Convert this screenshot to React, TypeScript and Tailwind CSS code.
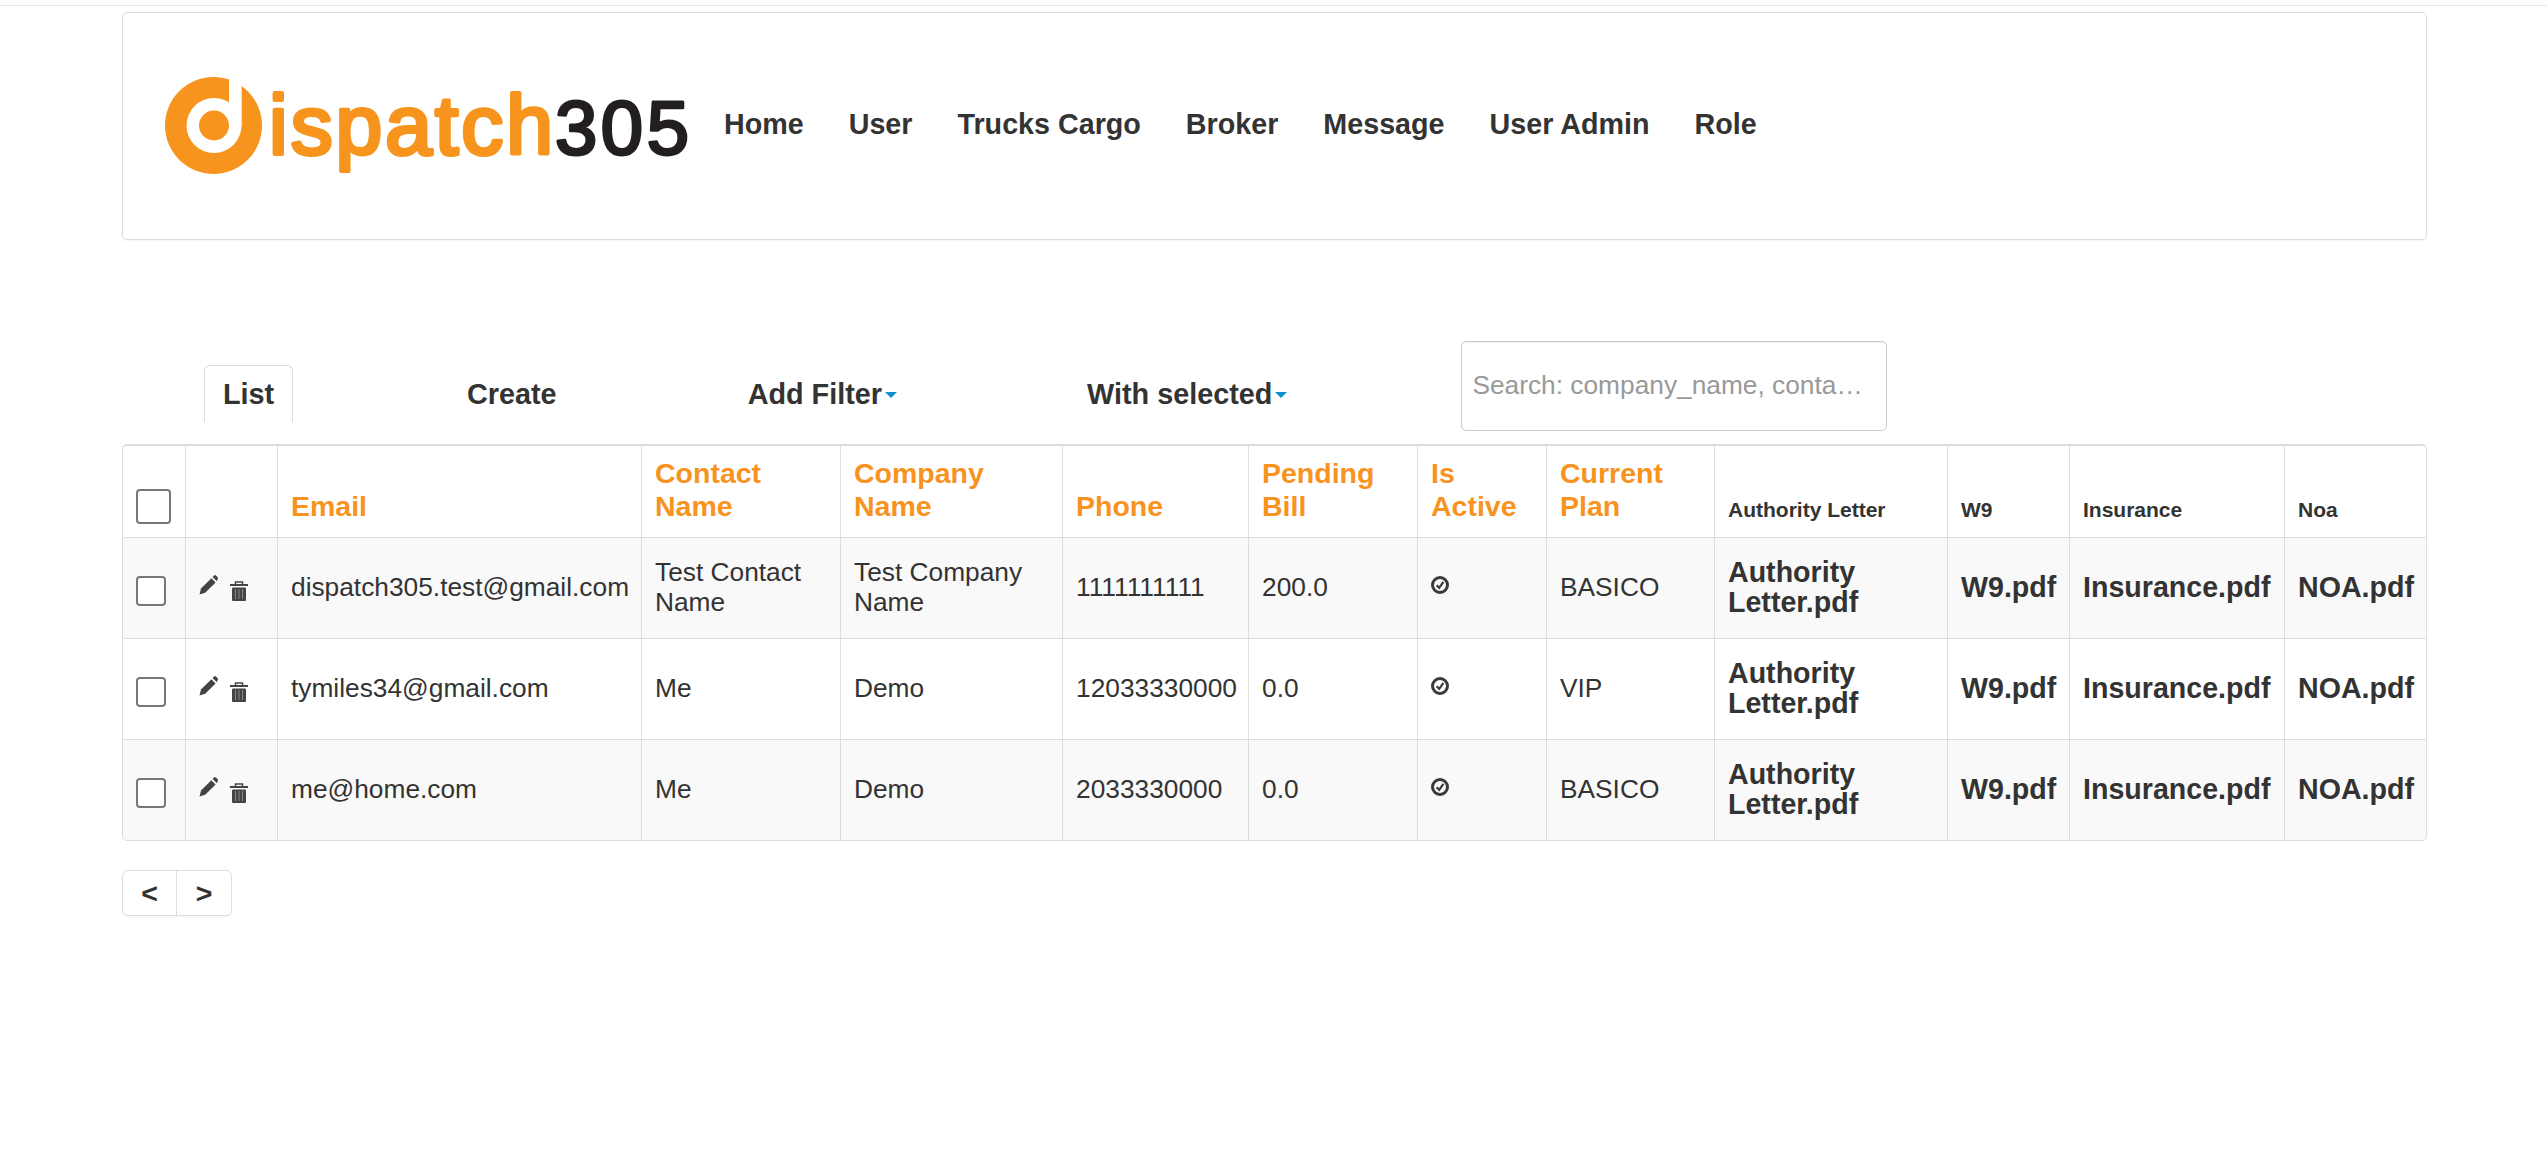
const navLinks = ["Home", "User", "Trucks Cargo", "Broker", "Message", "User Admin", "Role"];

const rows = [
  { email: "dispatch305.test@gmail.com", contact: "Test Contact Name", company: "Test Company Name", phone: "1111111111", bill: "200.0", plan: "BASICO" },
  { email: "tymiles34@gmail.com", contact: "Me", company: "Demo", phone: "12033330000", bill: "0.0", plan: "VIP" },
  { email: "me@home.com", contact: "Me", company: "Demo", phone: "2033330000", bill: "0.0", plan: "BASICO" },
];

const thBig = "border-r border-b border-[#ddd] px-[13px] pb-[14px] text-left align-bottom text-[28.5px] font-bold leading-[33px] text-[#f7931e]";
const thSmall = "border-r border-b border-[#ddd] px-[13px] pb-[12px] text-left align-bottom text-[21px] font-bold leading-[30px] text-[#333]";
const td = "border-r border-[#ddd] px-[13px] pb-[3px] align-middle text-[26.3px] leading-[30px] text-[#333]";
const tdFile = "border-r border-[#ddd] px-[13px] pb-[3px] align-middle text-[28.6px] font-bold leading-[30px] text-[#333]";

function Logo() {
  return (
    <svg width="530" height="100" viewBox="0 0 530 100" className="shrink-0">
      <circle cx="49.5" cy="49.5" r="48.5" fill="#f7941d" />
      <circle cx="50" cy="49.5" r="27.5" fill="#fff" />
      <rect x="65" y="-1" width="12.7" height="50" fill="#fff" />
      <circle cx="50" cy="49.5" r="15" fill="#f7941d" />
      <text x="105" y="77.5" fontFamily="Liberation Sans" fontSize="84" fill="#f7941d" stroke="#f7941d" strokeWidth="4" strokeLinejoin="round" textLength="284" lengthAdjust="spacing">
        ispatch
      </text>
      <text x="391" y="77.5" fontFamily="Liberation Sans" fontSize="76" fill="#231f20" stroke="#231f20" strokeWidth="3" strokeLinejoin="round" textLength="134" lengthAdjust="spacing">
        305
      </text>
    </svg>
  );
}

function Caret() {
  return <span className="ml-[3px] inline-block h-0 w-0 border-x-[6px] border-t-[6px] border-x-transparent border-t-[#0a8fd0] align-middle" />;
}

function PencilIcon() {
  return (
    <svg width="19" height="20" viewBox="0 0 19 20" className="shrink-0">
      <path d="M0.5 19.5L2 13.6L12.4 3.2L16.6 7.4L6.2 17.8Z" fill="#444" />
      <path d="M13.6 2L15 0.6C15.6 0 16.4 0 17 0.6L18.6 2.2C19.2 2.8 19.2 3.6 18.6 4.2L17.8 6.2Z" fill="#444" />
    </svg>
  );
}

function TrashIcon() {
  return (
    <svg width="18" height="20" viewBox="0 0 18 20" className="shrink-0">
      <path d="M5.5 3V1H12.5V3" fill="none" stroke="#444" strokeWidth="1.5" />
      <rect x="0" y="3" width="18" height="2" fill="#444" />
      <rect x="2" y="6.5" width="14" height="13.5" rx="1" fill="#444" />
      <path d="M5.5 8V18M9 8V18M12.5 8V18" stroke="#888" strokeWidth="1" />
    </svg>
  );
}

function ActiveIcon() {
  return (
    <svg width="18" height="18" viewBox="0 0 18 18" className="mb-[4px] block">
      <circle cx="9" cy="9" r="7.5" fill="none" stroke="#3a3a3a" strokeWidth="3" />
      <path d="M5.6 9.2L8.2 11.8L12.4 5.8" fill="none" stroke="#3a3a3a" strokeWidth="2.2" />
    </svg>
  );
}

export default function App() {
  return (
    <div className="min-h-[1172px] bg-white pl-[122px] pr-[120px] font-['Liberation_Sans',Arial,sans-serif] text-[#333]">
      <div className="-ml-[122px] -mr-[120px] h-[6px] border-b border-[#e7e7e7]" />

      <nav className="mt-[6px] flex h-[228px] items-start rounded-[5px] border border-[#ddd] pt-[63px] pl-[41px] shadow-[0_1px_2px_rgba(0,0,0,0.05)]">
        <Logo />
        <ul className="ml-[30px] flex h-[98px] items-center gap-[45px] pb-[1px] text-[28.7px] font-bold text-[#333]">
          {navLinks.map((link) => (
            <li key={link}>{link}</li>
          ))}
        </ul>
      </nav>

      <div className="relative mt-[101px] flex h-[103px] items-start pl-[82px]">
        <div className="mt-[24px] flex h-[57px] w-[89px] items-center justify-center rounded-t-[6px] border-x border-t border-[#ddd] pt-[2px] text-[28.8px] font-bold">
          List
        </div>
        <div className="ml-[174px] mt-[26px] flex h-[56px] items-center text-[28.8px] font-bold">Create</div>
        <div className="ml-[191px] mt-[26px] flex h-[56px] items-center text-[28.8px] font-bold">
          Add Filter
          <Caret />
        </div>
        <div className="ml-[190px] mt-[26px] flex h-[56px] items-center text-[28.8px] font-bold">
          With selected
          <Caret />
        </div>
        <input
          className="ml-[174px] h-[90px] w-[426px] rounded-[5px] border border-[#ccc] pl-[10px] pr-[16px] pb-[2px] text-[26.3px] text-ellipsis text-[#333] shadow-[inset_0_1px_1px_rgba(0,0,0,0.075)] outline-none placeholder:text-[#999]"
          placeholder="Search: company_name, contact_name, email"
        />
      </div>

      <div className="overflow-hidden rounded-[5px] border-x border-b border-t-2 border-[#ddd]">
        <table className="w-full table-fixed border-separate border-spacing-0">
          <colgroup>
            <col className="w-[63px]" />
            <col className="w-[92px]" />
            <col className="w-[364px]" />
            <col className="w-[199px]" />
            <col className="w-[222px]" />
            <col className="w-[186px]" />
            <col className="w-[169px]" />
            <col className="w-[129px]" />
            <col className="w-[168px]" />
            <col className="w-[233px]" />
            <col className="w-[122px]" />
            <col className="w-[215px]" />
            <col className="w-[141px]" />
          </colgroup>
          <thead>
            <tr className="h-[92px]">
              <th className="border-r border-b border-[#ddd] pb-[13px] pl-[13px] text-left align-bottom">
                <input type="checkbox" className="block h-[35px] w-[35px] appearance-none rounded-[4px] border-2 border-[#767676] bg-white" />
              </th>
              <th className="border-r border-b border-[#ddd]" />
              <th className={thBig}>Email</th>
              <th className={thBig}>Contact Name</th>
              <th className={thBig}>Company Name</th>
              <th className={thBig}>Phone</th>
              <th className={thBig}>Pending Bill</th>
              <th className={thBig}>Is Active</th>
              <th className={thBig}>Current Plan</th>
              <th className={thSmall}>Authority Letter</th>
              <th className={thSmall}>W9</th>
              <th className={thSmall}>Insurance</th>
              <th className={thSmall.replace("border-r ", "")}>Noa</th>
            </tr>
          </thead>
          <tbody>
            {rows.map((row, i) => (
              <tr key={row.email} className={i === 2 ? "h-[100px] bg-[#f9f9f9]" : i === 0 ? "h-[101px] bg-[#f9f9f9]" : "h-[101px] bg-white"}>
                <td className={`border-r border-[#ddd] pl-[13px] align-middle ${i < 2 ? "border-b" : ""}`}>
                  <input type="checkbox" className="mt-[6px] block h-[30px] w-[30px] appearance-none rounded-[4px] border-2 border-[#767676] bg-white" />
                </td>
                <td className={`border-r border-[#ddd] pl-[13px] align-middle ${i < 2 ? "border-b" : ""}`}>
                  <div className="flex items-start gap-[12px]">
                    <PencilIcon />
                    <div className="mt-[6px]">
                      <TrashIcon />
                    </div>
                  </div>
                </td>
                <td className={`${td} ${i < 2 ? "border-b" : ""}`}>{row.email}</td>
                <td className={`${td} ${i < 2 ? "border-b" : ""}`}>{row.contact}</td>
                <td className={`${td} ${i < 2 ? "border-b" : ""}`}>{row.company}</td>
                <td className={`${td} ${i < 2 ? "border-b" : ""}`}>{row.phone}</td>
                <td className={`${td} ${i < 2 ? "border-b" : ""}`}>{row.bill}</td>
                <td className={`${td} ${i < 2 ? "border-b" : ""}`}>
                  <ActiveIcon />
                </td>
                <td className={`${td} ${i < 2 ? "border-b" : ""}`}>{row.plan}</td>
                <td className={`${tdFile} ${i < 2 ? "border-b" : ""}`}>Authority Letter.pdf</td>
                <td className={`${tdFile} ${i < 2 ? "border-b" : ""}`}>W9.pdf</td>
                <td className={`${tdFile} ${i < 2 ? "border-b" : ""}`}>Insurance.pdf</td>
                <td className={`${tdFile} !border-r-0 ${i < 2 ? "border-b" : ""}`}>NOA.pdf</td>
              </tr>
            ))}
          </tbody>
        </table>
      </div>

      <div className="mt-[29px] flex h-[46px] w-[110px] rounded-[6px] border border-[#ddd] text-[28.5px] font-bold shadow-[0_1px_2px_rgba(0,0,0,0.05)]">
        <div className="flex w-[54px] items-center justify-center border-r border-[#ddd]">&lt;</div>
        <div className="flex flex-1 items-center justify-center">&gt;</div>
      </div>
    </div>
  );
}
